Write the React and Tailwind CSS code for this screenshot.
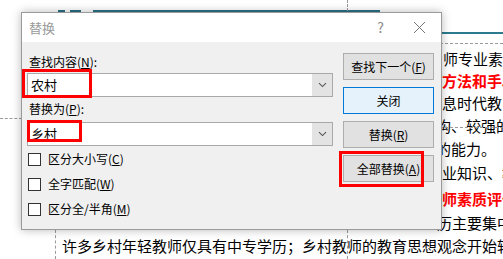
import React from 'react';

const cjk = { fontFamily: '"Noto Sans CJK SC", "Noto Sans", sans-serif' };

const Chevron = () => (
  <svg width="9" height="6" viewBox="0 0 9 6" fill="none">
    <path d="M1 1.2 L4.5 4.6 L8 1.2" stroke="#555" strokeWidth="1.1" />
  </svg>
);

const Combo = ({ value }) => (
  <div className="flex h-[24px] border border-[#a9a9a9] bg-white">
    <div className="flex-1 flex items-center pl-[3px] text-[13px] text-black">{value}</div>
    <div className="w-[20px] bg-[#e3e3e3] flex items-center justify-center">
      <Chevron />
    </div>
  </div>
);

const Check = ({ children }) => (
  <div className="flex items-center h-[20px] ml-[1px] gap-[7px]">
    <div className="w-[13px] h-[13px] border border-[#333] bg-white" />
    <span className="text-[12px] text-black">{children}</span>
  </div>
);

const Btn = ({ children, active }) => (
  <div
    className={
      active
        ? 'h-[27px] flex items-center justify-center border border-[#0078d7] bg-[#e5f1fb] text-[12px] text-black'
        : 'h-[27px] flex items-center justify-center border border-[#adadad] bg-[#e1e1e1] text-[12px] text-black'
    }
  >
    {children}
  </div>
);

export default function App() {
  return (
    <div className="relative w-[503px] h-[259px] overflow-hidden bg-white" style={cjk}>
      {/* document behind */}
      <div className="absolute left-[58px] top-[10px] w-[7px] h-[2px] bg-[#2b6f86]" />
      <div className="absolute left-[70px] top-[10px] w-[11px] h-[2px] bg-[#2b6f86]" />
      <div className="absolute left-[93px] top-[10px] w-[287px] h-[2px] bg-[#2b7287]" />
      <div className="absolute left-[440px] top-[32px] w-[63px] h-[2px] bg-[#2b7a8e]" />
      <div className="absolute left-[440px] top-[43px] w-[63px] border-t border-dashed border-[#9a9a9a]" />
      <div className="absolute left-[440px] top-[127px] w-[63px] border-t border-dashed border-[#9a9a9a]" />
      <div className="absolute left-0 top-[118px] w-[22px] border-t border-dashed border-[#9a9a9a]" />
      <div className="absolute left-[347px] top-0 h-[11px] border-l border-dashed border-[#9a9a9a]" />
      <div className="absolute left-[347px] top-[230px] h-[29px] border-l border-dashed border-[#9a9a9a]" />
      <div className="absolute left-[55px] top-[230px] h-[29px] border-l border-dashed border-[#9a9a9a]" />

      <div className="flex flex-col pt-[48px] text-[15px] text-black whitespace-nowrap">
        <div className="h-[22px] leading-[22px] pl-[443px]">师专业素质</div>
        <div className="h-[22px] leading-[22px] pl-[442px] font-bold text-[#ff0000]">方法和手段</div>
        <div className="h-[22px] leading-[22px] pl-[442px]">息时代教师</div>
        <div className="h-[24px] leading-[24px] pl-[436px]">构、较强的</div>
        <div className="h-[22px] leading-[22px] pl-[436px]">的能力。</div>
        <div className="h-[26px] leading-[26px] pl-[442px]">业知识、教</div>
        <div className="h-[25px] leading-[25px] pl-[442px] font-bold text-[#ff0000]">师素质评价</div>
        <div className="h-[24px] leading-[24px] pl-[437px]">历主要集中</div>
        <div className="h-[22px] leading-[22px] pl-[62px]">许多乡村年轻教师仅具有中专学历；乡村教师的教育思想观念开始转</div>
      </div>

      {/* dialog */}
      <div className="absolute left-[21px] top-[12px] w-[421px] h-[218px] border border-[#9a9a9a] bg-[#f0f0f0] shadow-[0_0_9px_rgba(0,0,0,0.28)]">
        <div className="h-[29px] bg-white flex items-center pl-[7px]">
          <span className="text-[13px] text-[#9a9a9a]">替换</span>
          <span className="ml-auto text-[14px] text-[#8a8a8a] mr-[29px]">?</span>
          <svg width="13" height="13" viewBox="0 0 13 13" className="mr-[15px]">
            <path d="M1 1 L12 12 M12 1 L1 12" stroke="#777" strokeWidth="1" />
          </svg>
        </div>
        <div className="flex pt-[11px]">
          <div className="w-[306px] ml-[5px] flex flex-col">
            <div className="h-[18px] leading-[18px] pl-[2px] text-[12px] text-black">
              查找内容(<span className="underline">N</span>):
            </div>
            <div className="mt-[2px]">
              <Combo value="农村" />
            </div>
            <div className="mt-[3px] h-[18px] leading-[18px] pl-[2px] text-[12px] text-black">
              替换为(<span className="underline">P</span>):
            </div>
            <div className="mt-[4px]">
              <Combo value="乡村" />
            </div>
            <div className="mt-[3px] flex flex-col gap-[5px]">
              <Check>区分大小写(<span className="underline">C</span>)</Check>
              <Check>全字匹配(<span className="underline">W</span>)</Check>
              <Check>区分全/半角(<span className="underline">M</span>)</Check>
            </div>
          </div>
          <div className="ml-[10px] w-[91px] flex flex-col gap-[7px]">
            <Btn>查找下一个(<span className="underline">F</span>)</Btn>
            <Btn active>关闭</Btn>
            <Btn>替换(<span className="underline">R</span>)</Btn>
            <Btn>全部替换(<span className="underline">A</span>)</Btn>
          </div>
        </div>

        {/* red highlight boxes */}
        <div className="absolute left-0 top-[56px] w-[70px] h-[29px] border-[3px] border-[#ff0000]" />
        <div className="absolute left-[5px] top-[107px] w-[55px] h-[22px] border-[3px] border-[#ff0000]" />
        <div className="absolute left-[317px] top-[138px] w-[85px] h-[36px] border-[3px] border-[#ff0000]" />
      </div>
    </div>
  );
}
